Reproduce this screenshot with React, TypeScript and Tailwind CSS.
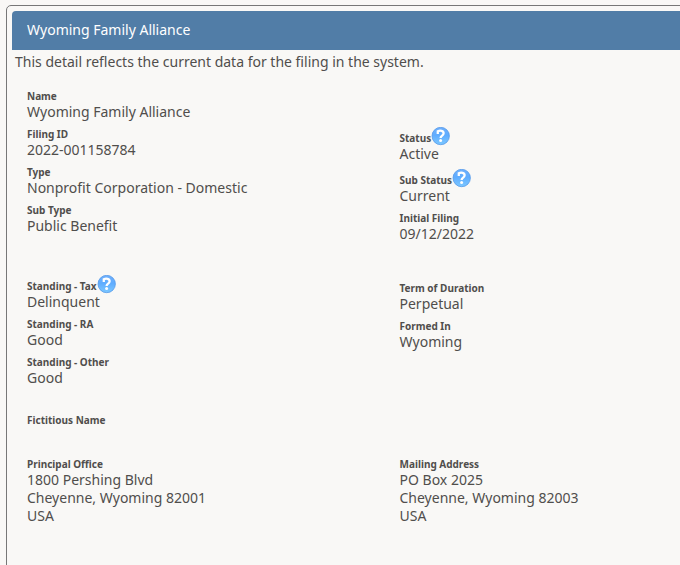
import React, { useId } from "react";

type FieldProps = { label: string; lines?: string[]; help?: boolean };

function HelpIcon() {
  const fill = useId();
  return (
    <svg width="19" height="19" viewBox="0 0 19 19" className="mt-[5px] shrink-0">
      <defs>
        <linearGradient id={fill} x1="0" y1="0" x2="0" y2="1">
          <stop offset="0" stopColor="#70b0fc" />
          <stop offset="0.45" stopColor="#5facff" />
          <stop offset="1" stopColor="#7cc8ff" />
        </linearGradient>
      </defs>
      <circle cx="9.7" cy="9" r="8.7" fill={`url(#${fill})`} stroke="#589be8" strokeWidth="0.8" />
      <path d="M6.8 6.9V4.3C9.2 3.1 12.6 3.8 12.6 6.3C12.6 8.8 9.6 8.4 9.6 11" fill="none" stroke="#fff" strokeWidth="2.3" />
      <circle cx="9.6" cy="13.5" r="1.5" fill="#fff" />
    </svg>
  );
}

function Field({ label, lines = [], help }: FieldProps) {
  return (
    <div className="pb-px">
      <div className={help ? "flex h-[23px] items-start" : "flex h-[19px] items-start"}>
        <span className={help ? "pt-2 text-[10px] leading-4 font-bold" : "pt-1 text-[10px] leading-4 font-bold"}>{label}</span>
        {help && <HelpIcon />}
      </div>
      {lines.map((line) => (
        <div key={line} className="h-[18px] text-[14px] leading-[18px]">{line}</div>
      ))}
    </div>
  );
}

export default function App() {
  return (
    <div className="h-[565px] w-[680px] overflow-hidden bg-[#f9f8f6] pt-[5px] pl-[6px] font-['Noto_Sans',sans-serif] text-[14px] text-[#504e4c]">
      <div className="h-[600px] w-[700px] rounded-[5px] border border-[#777] pt-[5px] pl-[5px]">
        <div className="h-[39px] rounded-tl-[4px] bg-[#517da7] pl-[15px] leading-[38px] text-white">Wyoming Family Alliance</div>
        <div className="h-[34px] pl-[3px] leading-6">This detail reflects the current data for the filing in the system.</div>
        <div className="grid grid-cols-[372.5px_1fr] pl-[15px]">
          <div className="h-[190px]">
            <Field label="Name" lines={["Wyoming Family Alliance"]} />
            <Field label="Filing ID" lines={["2022-001158784"]} />
            <Field label="Type" lines={["Nonprofit Corporation - Domestic"]} />
            <Field label="Sub Type" lines={["Public Benefit"]} />
          </div>
          <div className="pt-[38px]">
            <Field label="Status" lines={["Active"]} help />
            <Field label="Sub Status" lines={["Current"]} help />
            <Field label="Initial Filing" lines={["09/12/2022"]} />
          </div>
          <div className="-mt-[4px] h-[138px]">
            <Field label="Standing - Tax" lines={["Delinquent"]} help />
            <Field label="Standing - RA" lines={["Good"]} />
            <Field label="Standing - Other" lines={["Good"]} />
          </div>
          <div className="pt-[2px]">
            <Field label="Term of Duration" lines={["Perpetual"]} />
            <Field label="Formed In" lines={["Wyoming"]} />
          </div>
          <div className="col-span-2 h-[44px]"><Field label="Fictitious Name" /></div>
          <Field label="Principal Office" lines={["1800 Pershing Blvd", "Cheyenne, Wyoming 82001", "USA"]} />
          <Field label="Mailing Address" lines={["PO Box 2025", "Cheyenne, Wyoming 82003", "USA"]} />
        </div>
      </div>
    </div>
  );
}
